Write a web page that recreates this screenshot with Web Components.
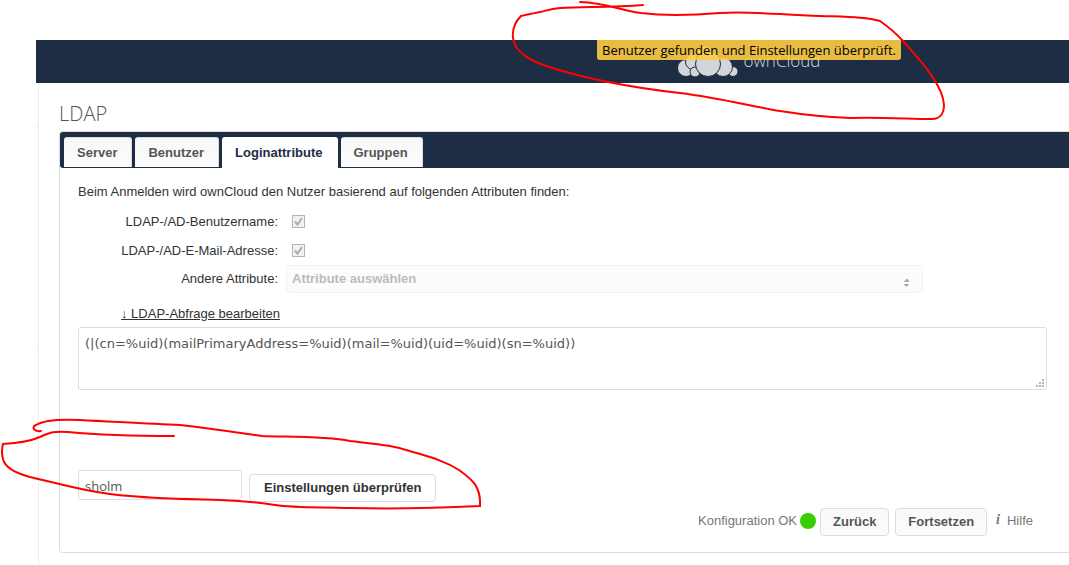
<!DOCTYPE html>
<html lang="de">
<head>
<meta charset="utf-8">
<title>LDAP – ownCloud</title>
<style>
html, body { margin: 0; background: #fff; }
body { position: relative; overflow: hidden; min-height: 100vh; font: 13px/20px "Liberation Sans", Arial, sans-serif; color: #333; }
</style>
</head>
<body>
<oc-page>
  <oc-header slot="header">
    <oc-toast>Benutzer gefunden und Einstellungen überprüft.</oc-toast>
  </oc-header>
  <oc-settings></oc-settings>
</oc-page>
<pen-marks></pen-marks>
<script>
const define = (name, html) => customElements.define(name, class extends HTMLElement {
  constructor() {
    super();
    const t = document.createElement('template');
    t.innerHTML = html.replace(/\{(\w+)\}/g, (_, k) => this.getAttribute(k) || '');
    this.attachShadow({ mode: 'open' }).append(t.content.cloneNode(true));
  }
});

define('oc-page', `
<style>
:host { display: flex; flex-direction: column; min-height: 100vh; padding: 40px 0 0 36px; box-sizing: border-box; }
main { flex: 1; margin-left: 2px; padding: 20px 0 12px 20px; border-left: 1px solid #eee; }
</style>
<slot name="header"></slot>
<main><slot></slot></main>`);

define('oc-header', `
<style>
:host { display: block; background: #1d2d44; padding-left: 393px; }
.bar { position: relative; display: flex; justify-content: center; align-items: center; gap: 6px; height: 43px; color: #d2d5da; font: 300 17px/20px "Open Sans", sans-serif; }
svg, span { display: block; margin-bottom: 2px; }
</style>
<div class="bar">
  <svg width="60" height="34" viewBox="0 0 60 34" fill="#d2d5da" stroke="#1d2d44" aria-hidden="true">
    <circle cx="8" cy="24" r="8.5"/><circle cx="15" cy="18" r="7.5"/><circle cx="27" cy="11" r="9"/>
    <circle cx="17" cy="28" r="5"/><circle cx="55" cy="27.500" r="5"/><circle cx="45" cy="23" r="9.500"/><circle cx="30" cy="20" r="12.500"/>
  </svg>
  <span>ownCloud</span>
  <slot></slot>
</div>`);

define('oc-toast', `
<style>
:host { position: absolute; top: 0; left: 0; right: 0; width: fit-content; margin: 0 auto; padding: 0 5px; background: rgba(255,204,68,.9); border-radius: 0 0 3px 3px; color: #000; font: 13px/20px "Open Sans", sans-serif; white-space: nowrap; }
</style>
<slot></slot>`);

define('oc-tab', `
<style>
:host { display: block; }
button { display: block; height: 30px; padding: 0 14px 0 13px; border: 1px solid #ddd; border-width: 1px 1px 0 0; border-radius: 3px 3px 0 0; background: linear-gradient(#f8f8f8, #fcfcfc); color: #555; font: bold 13px/28px "Liberation Sans", Arial, sans-serif; }
:host([active]) button { height: 31px; border-color: #fff; background: #fff; color: #1d2d44; }
</style>
<button type="button" role="tab"><slot></slot></button>`);

define('oc-button', `
<style>
:host { display: block; }
button { display: block; height: 28px; padding: 0 12px; border: 1px solid #ddd; border-radius: 4px; background: linear-gradient(#f8f8f8, #fcfcfc); color: #555; font: bold 13px/26px "Liberation Sans", Arial, sans-serif; white-space: nowrap; }
:host([plain]) button { padding: 0 14px; background: #fff; color: #333; }
</style>
<button type="button"><slot></slot></button>`);

define('oc-check-row', `
<style>
:host { display: grid; grid-template-columns: 200px 1fr; align-items: center; column-gap: 14px; height: 29px; }
label { text-align: right; }
.box { display: grid; width: 13px; height: 13px; }
input, svg { grid-area: 1 / 1; }
input { appearance: none; box-sizing: border-box; width: 13px; height: 13px; margin: 0; border: 1px solid #b4b4b4; background: #f2f2f2; }
</style>
<label for="c">{label}</label>
<div class="box"><input id="c" type="checkbox" checked disabled><svg width="13" height="13" fill="none" stroke="#adadad" stroke-width="2" aria-hidden="true"><path d="M3 6.500 5.500 9.500 10 3"/></svg></div>`);

define('oc-select-row', `
<style>
:host { display: grid; grid-template-columns: 200px minmax(0, 637px); align-items: center; column-gap: 8px; height: 28px; }
label { text-align: right; }
.box { display: grid; grid-template-columns: 1fr 20px; align-items: center; }
select { grid-area: 1 / 1 / 2 / 3; appearance: none; box-sizing: border-box; width: 100%; height: 28px; margin: 0; padding: 0 5px; border: 1px solid #f2f2f2; border-radius: 4px; background: #fcfcfc; color: #bbb; opacity: 1; font: bold 13px/26px "Liberation Sans", Arial, sans-serif; }
svg { grid-area: 1 / 2; margin-top: 8px; }
</style>
<label for="s">{label}</label>
<div class="box"><select id="s" disabled><option>{value}</option></select><svg width="7" height="8" fill="#a5adb5" aria-hidden="true"><path d="M3 0h2v1h1v2H1V2h1V1h1zM1 5h5v1H5v1H4v1H3V7H2V6H1z"/></svg></div>`);

define('oc-settings', `
<style>
:host { display: block; }
h2 { margin: 0; font: 300 20px/22px "Open Sans", sans-serif; color: #555; }
.panel { margin-top: 6px; border: 1px solid #ddd; border-right: 0; border-radius: 4px 0 0 4px; }
.tabs { display: flex; gap: 3px; box-sizing: border-box; height: 36px; padding: 5px 4px 0; background: #1d2d44; border-radius: 3px 0 0 3px; }
.body { padding: 14px 22px 16px 18px; }
p { margin: 0 0 5px; }
a { color: #333; }
.raw { display: block; width: fit-content; margin: 11px 0 3px 43px; }
textarea { display: block; box-sizing: border-box; width: 100%; height: 63px; margin: 0; padding: 6px; border: 1px solid #ddd; border-radius: 3px; color: #555; font: 13px/20px "DejaVu Sans", sans-serif; resize: none; outline: 0; }
.area { display: grid; }
.area > * { grid-area: 1 / 1; }
.area svg { place-self: end; margin: 0 3px 2px 0; }
.test { display: flex; align-items: end; gap: 7px; margin-top: 80px; }
.test oc-button { margin-bottom: -2px; }
input { box-sizing: border-box; width: 164px; height: 30px; margin: 0; padding: 2px 6px 0; border: 1px solid #ddd; border-radius: 3px; color: #555; font: 13px/20px "Open Sans", sans-serif; }
.foot { display: flex; justify-content: flex-end; align-items: center; margin: 8px 14px 0 0; color: #777; }
.dot { width: 16px; height: 16px; border-radius: 50%; background: #37ce02; margin: 0 4px 3px 3px; }
.foot oc-button + oc-button { margin-left: 6px; }
.label, .help { margin-bottom: 3px; }
.help { display: flex; gap: 7px; margin-left: 9px; color: #777; text-decoration: none; }
i { font: italic bold 14px/18px "Liberation Serif", serif; }
</style>
<h2>LDAP</h2>
<section class="panel">
  <nav class="tabs" role="tablist"><oc-tab>Server</oc-tab><oc-tab>Benutzer</oc-tab><oc-tab active>Loginattribute</oc-tab><oc-tab>Gruppen</oc-tab></nav>
  <div class="body">
    <p>Beim Anmelden wird ownCloud den Nutzer basierend auf folgenden Attributen finden:</p>
    <oc-check-row label="LDAP-/AD-Benutzername:"></oc-check-row>
    <oc-check-row label="LDAP-/AD-E-Mail-Adresse:"></oc-check-row>
    <oc-select-row label="Andere Attribute:" value="Attribute auswählen"></oc-select-row>
    <a class="raw" href="#">↓ LDAP-Abfrage bearbeiten</a>
    <div class="area">
      <textarea aria-label="LDAP-Abfrage">(|(cn=%uid)(mailPrimaryAddress=%uid)(mail=%uid)(uid=%uid)(sn=%uid))</textarea>
      <svg width="9" height="9" fill="#b5b5b5" aria-hidden="true"><path d="M7 0h2v2H7zM4 3h2v2H4zM7 3h2v2H7zM1 6h2v2H1zM4 6h2v2H4zM7 6h2v2H7z"/></svg>
    </div>
    <div class="test"><input aria-label="Loginname" value="sholm"><oc-button plain>Einstellungen überprüfen</oc-button></div>
    <div class="foot"><span class="label">Konfiguration OK</span><span class="dot"></span><oc-button>Zurück</oc-button><oc-button>Fortsetzen</oc-button><a class="help" href="#"><i>i</i><span>Hilfe</span></a></div>
  </div>
</section>`);

define('pen-marks', `
<style>
:host { position: absolute; top: 0; left: 0; pointer-events: none; }
svg { display: block; }
</style>
<svg width="1069" height="565" fill="none" stroke="#f00" stroke-width="2" stroke-linecap="round" aria-hidden="true">
<path stroke="#eee" stroke-width="1" d="M36 127.500h2M36 348.500h2"/>
<path d="M643 5C610 8 580 6 560 8C550 9 545 11 540 12C530 14 525 15 521 16C515 22 512 29 513 38C515 54 534 62 549 67C590 80 635 88 680 93C720 98 750 106 780 111C805 115 825 117 850 118C880 117 910 119 932 119C941 119 944 112 944 105C943 84 918 58 903 41C895 32 887 26 880 21C867 17 850 17 820 16C780 15 755 11 720 13C695 15 665 16 641 13C615 9 607 3 580 2"/>
<path d="M41 431C34 432 31 427 36 425C44 420 60 419 80 420C120 422 150 424 180 425C215 429 240 433 262 436C290 437 325 436 350 441C375 444 393 445 413 452C430 457 445 461 459 470C473 480 481 487 480 506C440 508 390 509 350 508C320 507 295 508 275 505C255 502 245 501 220 500C180 499 150 498 130 496C95 494 60 484 30 477C15 473 5 468 3 459C1 452 2 448 3 444C20 443 33 440 40 437C50 432 55 431 68 432C100 435 140 436 174 436"/>
</svg>`);
</script>
</body>
</html>
